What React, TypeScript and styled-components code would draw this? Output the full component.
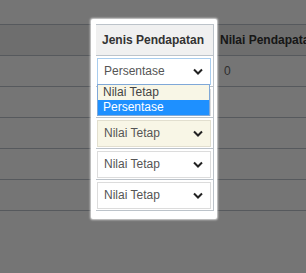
import React from 'react';
import styled, { createGlobalStyle } from 'styled-components';

const GlobalStyle = createGlobalStyle`
  html, body {
    margin: 0;
    padding: 0;
    background: #fff;
  }
  body {
    font-family: Arial, "Liberation Sans", sans-serif;
    overflow: hidden;
  }
`;

const Page = styled.div`
  position: relative;
  width: 306px;
  height: 273px;
  overflow: hidden;
  padding-top: 24px;
  box-sizing: border-box;
`;

const Table = styled.table`
  border-collapse: separate;
  border-spacing: 0;
  table-layout: fixed;
  width: 400px;
  font-size: 12px;
  color: #555;
`;

const Th = styled.th<{ $focus?: boolean; $w?: number }>`
  box-sizing: border-box;
  height: 32px;
  width: ${p => (p.$w ? `${p.$w}px` : 'auto')};
  padding: 0 6px;
  text-align: left;
  font-weight: bold;
  font-size: 12px;
  color: #333;
  white-space: nowrap;
  overflow: hidden;
  background: #f0f0f0;
  border-top: 1px solid #bcc3ca;
  border-bottom: 1px solid #bcc3ca;
  border-right: 1px solid #bcc3ca;
  position: ${p => (p.$focus ? 'relative' : 'static')};
  z-index: ${p => (p.$focus ? 2 : 'auto')};
`;

const Td = styled.td<{ $focus?: boolean }>`
  box-sizing: border-box;
  height: 31px;
  padding: 0 2px 0 1px;
  vertical-align: middle;
  background: #fff;
  border-bottom: 1px solid #bcc3ca;
  border-right: 1px solid #bcc3ca;
  position: ${p => (p.$focus ? 'relative' : 'static')};
  z-index: ${p => (p.$focus ? 2 : 'auto')};
`;

const Value = styled.span`
  padding-left: 9px;
  color: #666;
`;

const Select = styled.div<{ $tone: 'focus' | 'filled' | 'plain' }>`
  box-sizing: border-box;
  height: 27px;
  display: flex;
  align-items: center;
  justify-content: space-between;
  padding: 0 7px 0 6px;
  font-size: 12px;
  color: #555;
  background: ${p => (p.$tone === 'filled' ? '#f8f6e6' : '#fff')};
  border: 1px solid
    ${p => (p.$tone === 'focus' ? '#a9cdee' : p.$tone === 'filled' ? '#e2dfcf' : '#dcdcdc')};
`;

const Highlight = styled.div`
  position: absolute;
  left: 91px;
  top: 19px;
  width: 126px;
  height: 200px;
  background: #fff;
  border-radius: 2px;
  z-index: 1;
  box-shadow: 0 0 2px 1px rgba(255, 255, 255, 0.7), 0 0 0 5000px rgba(0, 0, 0, 0.54);
`;

const OptionList = styled.div`
  position: absolute;
  left: 97px;
  top: 84px;
  width: 113px;
  box-sizing: border-box;
  border: 1px solid #7fa8d8;
  background: #f8f6e6;
  z-index: 3;
`;

const Option = styled.div<{ $active?: boolean }>`
  height: 15px;
  line-height: 15px;
  padding-left: 5px;
  font-size: 12px;
  color: ${p => (p.$active ? '#fff' : '#444')};
  background: ${p => (p.$active ? '#1e90ff' : 'transparent')};
`;

const Chevron = () => (
  <svg width="10" height="7" viewBox="0 0 10 7">
    <polyline points="1,1.5 5,5.5 9,1.5" fill="none" stroke="#222" strokeWidth="2" />
  </svg>
);

const rows: { value: string; tone: 'focus' | 'filled' | 'plain'; amount: string }[] = [
  { value: 'Persentase', tone: 'focus', amount: '0' },
  { value: 'Nilai Tetap', tone: 'plain', amount: '' },
  { value: 'Nilai Tetap', tone: 'filled', amount: '' },
  { value: 'Nilai Tetap', tone: 'plain', amount: '' },
  { value: 'Nilai Tetap', tone: 'plain', amount: '' },
];

const App = () => {
  return (
    <React.Fragment>
      <GlobalStyle />
      <Page>
        <Table>
          <thead>
            <tr>
              <Th $w={96}></Th>
              <Th $w={118} $focus>Jenis Pendapatan</Th>
              <Th>Nilai Pendapatan</Th>
            </tr>
          </thead>
          <tbody>
            {rows.map((r, i) => (
              <tr key={i}>
                <Td></Td>
                <Td $focus>
                  <Select $tone={r.tone}>
                    <span>{r.value}</span>
                    <Chevron />
                  </Select>
                </Td>
                <Td>{r.amount && <Value>{r.amount}</Value>}</Td>
              </tr>
            ))}
          </tbody>
        </Table>
        <Highlight />
        <OptionList>
          <Option>Nilai Tetap</Option>
          <Option $active>Persentase</Option>
        </OptionList>
      </Page>
    </React.Fragment>
  );
};

export default App;
